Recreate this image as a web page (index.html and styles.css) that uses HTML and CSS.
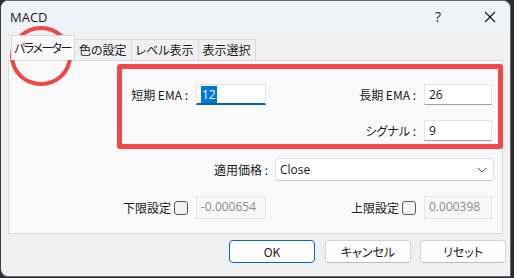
FILE: index.html
```html
<!DOCTYPE html>
<html lang="ja">
<head>
  <meta charset="utf-8">
  <title>MACD</title>
  <link rel="stylesheet" href="styles.css">
</head>
<body>
  <div class="window">
    <div class="titlebar">
      <span class="title">MACD</span>
      <span class="help">?</span>
      <span class="close">
        <svg width="12" height="12" viewBox="0 0 12 12"><path d="M1 1 L11 11 M11 1 L1 11" stroke="#1a1a1a" stroke-width="1.2" fill="none"/></svg>
      </span>
    </div>
    <div class="content">
      <div class="tabs">
        <div class="tab active">パラメーター</div>
        <div class="tab">色の設定</div>
        <div class="tab">レベル表示</div>
        <div class="tab">表示選択</div>
      </div>
      <div class="panel">
        <div class="row quad first">
          <label class="lbl">短期 EMA :</label>
          <div class="field focus"><span class="sel">12</span></div>
          <label class="lbl">長期 EMA :</label>
          <div class="field">26</div>
        </div>
        <div class="row quad second">
          <span></span>
          <span></span>
          <label class="lbl">シグナル :</label>
          <div class="field">9</div>
        </div>
        <div class="row duo">
          <label class="lbl">適用価格 :</label>
          <div class="select">Close
            <svg width="10" height="6" viewBox="0 0 10 6"><path d="M1 1 L5 5 L9 1" stroke="#555" stroke-width="1" fill="none"/></svg>
          </div>
        </div>
        <div class="row quad last">
          <label class="lbl">下限設定 <span class="check"></span></label>
          <div class="field disabled">-0.000654</div>
          <label class="lbl">上限設定 <span class="check"></span></label>
          <div class="field disabled">0.000398</div>
        </div>
      </div>
      <div class="buttons">
        <button class="btn primary" type="button">OK</button>
        <button class="btn" type="button">キャンセル</button>
        <button class="btn" type="button">リセット</button>
      </div>
    </div>
    <div class="mark-circle"></div>
    <div class="mark-rect"></div>
  </div>
</body>
</html>
```

FILE: styles.css
```css
html, body { margin: 0; height: 100%; background: #2a2c30; }
body { font-family: "Noto Sans CJK JP", "Noto Sans", sans-serif; font-size: 12px; color: #1b1b1b; font-feature-settings: "palt"; }

.window { position: relative; width: 509px; height: 275px; background: #f0f0f0; border: 1px solid #6b6b6b; border-left-color: #3c3c3c; border-radius: 8px 8px 0 8px; overflow: hidden; }

.titlebar { height: 31px; background: #eef3f9; display: flex; align-items: center; }
.title { font-family: "Open Sans", "Noto Sans", sans-serif; font-size: 13px; margin-left: 9px; flex: 1; }
.help { font-family: "Open Sans", sans-serif; font-size: 14px; width: 20px; margin-right: 36px; text-align: center; }
.close { width: 12px; margin-right: 14px; display: flex; }

.content { padding: 6px 0 0 7px; }

.tabs { display: flex; align-items: flex-end; height: 22px; padding-left: 3px; position: relative; z-index: 1; }
.tab { height: 20px; line-height: 20px; padding: 0 4px; border: 1px solid #dadada; border-left: none; border-bottom: none; background: #f0f0f0; font-size: 12px; }
.tab.active { height: 24px; line-height: 24px; padding: 0 3px 0 2px; border-left: 1px solid #dadada; background: #f9f9f9; margin-top: -4px; letter-spacing: -1.5px; }

.panel { width: 493px; height: 172px; border: 1px solid #dadada; background: #f9f9f9; box-sizing: content-box; }

.row { display: grid; align-items: center; }
.quad { grid-template-columns: 179px 70px 1fr 68px; column-gap: 8px; padding-right: 10px; }
.first { margin-top: 23px; }
.second { margin-top: 15px; }
.duo { grid-template-columns: 1fr 219px; column-gap: 7px; padding-right: 8px; margin-top: 17px; }
.last { margin-top: 15px; }

.lbl { text-align: right; white-space: nowrap; display: flex; justify-content: flex-end; align-items: center; gap: 3px; }

.field { height: 21px; box-sizing: border-box; background: #fff; border: 1px solid #e5e5e5; border-bottom-color: #a0a0a0; font-family: "Open Sans", "Noto Sans", sans-serif; font-size: 12px; line-height: 19px; padding-left: 4px; }
.field.focus { border-bottom: 2px solid #0063b1; }
.sel { background: #0078d4; color: #fff; padding: 0 1px; }
.field.disabled { height: 23px; background: #f7f7f7; border-color: #e8e8e8; color: #8c8c8c; line-height: 20px; }

.select { height: 23px; box-sizing: border-box; background: #fff; border: 1px solid #e2e2e2; border-bottom-color: #c8c8c8; border-radius: 3px; font-family: "Open Sans", "Noto Sans", sans-serif; font-size: 12px; display: flex; align-items: center; justify-content: space-between; padding: 0 6px 0 4px; }

.check { display: inline-block; width: 12px; height: 12px; border: 1px solid #595959; border-radius: 3px; background: #f2f2f2; }

.buttons { display: flex; justify-content: flex-end; gap: 9px; padding-right: 4px; margin-top: 6px; }
.btn { width: 86px; height: 23px; box-sizing: border-box; border: 1px solid #d4d4d4; border-bottom-color: #bdbdbd; border-radius: 4px; background: #fdfdfd; font-family: "Noto Sans CJK JP", "Open Sans", sans-serif; font-feature-settings: "palt"; font-size: 12px; color: #1b1b1b; padding: 0; }
.btn.primary { border: 1px solid #0067c0; margin-right: 1px; }

.mark-circle { position: absolute; left: 9px; top: 25px; width: 54px; height: 52px; border: 4px solid #f04848; border-radius: 50%; }
.mark-rect { position: absolute; left: 116px; top: 63px; width: 376px; height: 75px; border: 5px solid #f04848; border-radius: 3px; }
```
